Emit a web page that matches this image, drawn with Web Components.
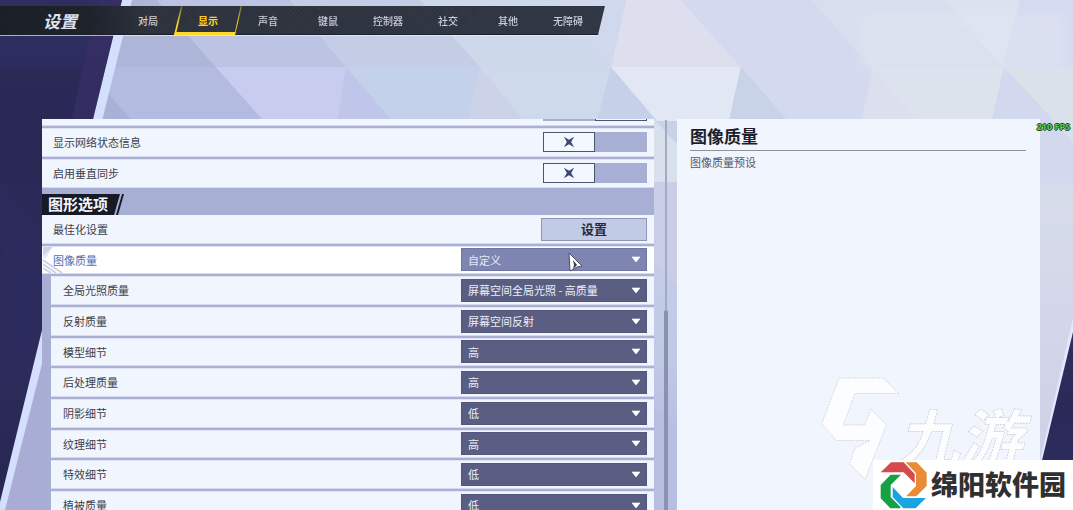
<!DOCTYPE html>
<html lang="zh-CN">
<head>
<meta charset="utf-8">
<meta name="viewport" content="width=device-width, initial-scale=1">
<title>设置</title>
<style>
  html, body { margin: 0; height: 100%; }
  body {
    overflow: hidden;
    font-family: "Noto Sans CJK SC", "Noto Sans", sans-serif;
    color: #3c404c;
  }
</style>
</head>
<body>
<settings-screen></settings-screen>

<script>
const define = (name, html, setup) => {
  const template = document.createElement('template');
  template.innerHTML = html;
  customElements.define(name, class extends HTMLElement {
    connectedCallback() {
      if (this.shadowRoot) return;
      const root = this.attachShadow({ mode: 'open' });
      root.append(template.content.cloneNode(true));
      if (setup) setup(this, root);
    }
  });
};

/* Faceted backdrop behind everything */
define('facet-backdrop', `
<style>
  :host { position: absolute; inset: 0; }
  svg { display: block; width: 100%; height: 100%; }
</style>
<svg viewBox="0 0 1073 510" preserveAspectRatio="none" aria-hidden="true">
  <defs>
    <linearGradient id="base" x1="0" y1="0" x2="0" y2="1">
      <stop offset="0.2" stop-color="#c8d2e9"/><stop offset="0.7" stop-color="#c0cae6"/><stop offset="0.85" stop-color="#b9bde2"/>
    </linearGradient>
    <linearGradient id="side" x1="0" y1="0" x2="0" y2="1">
      <stop offset="0" stop-color="#d9dfec"/><stop offset="1" stop-color="#cdcee6"/>
    </linearGradient>
    <linearGradient id="dark" x1="0" y1="0" x2="0" y2="1">
      <stop offset="0" stop-color="#2f2e61"/><stop offset="0.4" stop-color="#2a2958"/><stop offset="0.7" stop-color="#2c2b5c"/><stop offset="1" stop-color="#282751"/>
    </linearGradient>
    <filter id="soft"><feGaussianBlur stdDeviation="6"/></filter>
  </defs>
  <rect width="1073" height="510" fill="url(#base)"/>
  <path fill="#adb6d8" d="M100 0H157L216 67H80z"/>
  <path fill="#bcc3e3" d="M157 0H290L346 67H216z"/>
  <path fill="#c4cce6" d="M290 0H420L480 67H346z"/>
  <path fill="#cdd8eb" d="M420 0H552L611 67H480z"/>
  <path fill="#d0d8ee" d="M552 0H626L611 67z"/>
  <path fill="#dddfee" d="M626 0H681L741 67H611z"/>
  <path fill="#d5d9ef" d="M681 0H811L870 67H741z"/>
  <path fill="#d9deee" d="M811 0H943L1003 67H870z"/>
  <path fill="#dde3ee" d="M943 0H1020L1003 67z"/>
  <path fill="#d6daf0" d="M1020 0H1073V67H1003z"/>
  <path fill="#b3bbe0" d="M80 67H216L264 121H60z"/>
  <path fill="#a9b2d6" d="M108 93L132 121H102z"/>
  <path fill="#c8cdef" d="M216 67H346L337 121H264z"/>
  <path fill="#bfc6ea" d="M346 67L393 121H337z"/>
  <path fill="#c3d2ea" d="M346 67H480L468 121H393z"/>
  <path fill="#ccd2e8" d="M480 67L524 121H468z"/>
  <path fill="#cedaeb" d="M480 67H611L597 121H524z"/>
  <path fill="#c6d0e9" d="M611 67L657 121H597z"/>
  <path fill="#e1e7f3" d="M611 67H741L729 121H657z"/>
  <path fill="#c8d3e7" d="M741 67L788 121H729z"/>
  <path fill="#d3d9ef" d="M741 67H873L861 121H788z"/>
  <path fill="#dcdfed" d="M873 67L917 121H861z"/>
  <path fill="#dce3ed" d="M870 67H1004L992 121H917z"/>
  <path fill="url(#side)" d="M1036 119H1073V510H1036z"/>
  <path fill="#d2d8ed" d="M1004 67L1073 142V183H1036L992 121z"/>
  <path fill="#dae1eb" d="M1004 67H1073V142z"/>
  <path fill="#d8e0ec" d="M654 119L677 144V182H654z"/>
  <path fill="#c9cee6" d="M654 182H677V286L654 262z"/>
  <path fill="#b8bde2" d="M654 410L677 430V510H654z"/>
  <rect x="860" y="14" width="205" height="56" fill="#e0e5f2" opacity=".55" filter="url(#soft)"/>
  <path fill="#a9add5" d="M44 330V510H0z"/>
  <path fill="#d4defd" d="M121 0H132L102 121L42 364L5 510H0V490z"/>
  <path fill="url(#dark)" d="M0 0H122L93 119L42 330L0 502z"/>
  <path fill="#392f65" opacity=".6" d="M98 0H122L93 119H72L90 36z"/>
  <path fill="#28264f" opacity=".5" d="M0 67H82L72 119L42 180V183H0z"/>
  <path fill="#302e62" opacity=".4" d="M0 183L42 230V330L8 370z"/>
  <path fill="#e0e9ff" d="M1073 318V340L1044 470H1038z"/>
  <path fill="url(#dark)" d="M1073 332V510H1030z"/>
</svg>`);

define('top-nav', `
<style>
  :host { display: block; filter: drop-shadow(0 1px 0 #eef2fbaa); }
  header {
    display: flex; align-items: center; width: 605px; height: 29px; max-width: 100%;
    clip-path: polygon(0 0, 100% 0, calc(100% - 7px) 100%, 0 100%);
    background:
      repeating-linear-gradient(45deg, #ffffff05 0 1px, transparent 1px 3px),
      repeating-linear-gradient(-45deg, #0000000c 0 1px, transparent 1px 3px),
      linear-gradient(90deg, #1a1e26 0, #1d222b 90px, #2d323d 150px, #303745);
    box-shadow: inset 0 -1px #1b202b;
  }
  h1 { flex: none; box-sizing: border-box; width: 118px; margin: 0; padding-left: 43px; font-size: 17px; line-height: 29px; font-weight: 700; font-style: italic; color: #dbe2f0; }
  nav { display: flex; height: 100%; }
</style>
<header>
  <h1>设置</h1>
  <nav aria-label="设置"><slot></slot></nav>
</header>`);

define('nav-tab', `
<style>
  :host { position: relative; display: block; width: 60px; height: 29px; }
  button { width: 100%; height: 100%; padding: 0; border: 0; background: none; font: 500 10px/29px "Noto Sans CJK SC", sans-serif; color: #c9ced9; cursor: pointer; }
  svg { display: none; position: absolute; left: -4px; top: 0; pointer-events: none; }
  :host([active]) svg { display: block; }
  :host([active]) button { color: #fad51f; font-weight: 700; }
</style>
<button type="button"><slot></slot></button>
<svg width="68" height="29" aria-hidden="true">
  <defs><linearGradient id="g" x1="0" y1="0" x2="0" y2="1"><stop offset="0" stop-color="#ffd926" stop-opacity=".3"/><stop offset=".6" stop-color="#ffd926"/></linearGradient></defs>
  <path d="M7 0H8.500L2.500 26H61L66.500 0H68L61 29H0z" fill="url(#g)"/>
  <path d="M1 26H61.500L61 29H0z" fill="#ffd92a"/>
</svg>`);

define('section-title', `
<style>
  :host { display: flex; align-items: flex-end; height: 27px; background: #a8afd4; }
  h2 {
    margin: 0; padding: 0 12px 0 6px; height: 21px; font-size: 15px; line-height: 20px; font-weight: 700; color: #f2f5fc;
    background: #171a26; clip-path: polygon(0 0, 100% 0, calc(100% - 6px) 100%, 0 100%);
  }
  i { width: 8px; height: 21px; margin-left: -4px; background: #171a26; clip-path: polygon(75% 0, 100% 0, 25% 100%, 0 100%); }
</style>
<h2><slot></slot></h2><i></i>`);

/* One setting: a label and its control, chosen by the "type" attribute */
define('setting-row', `
<style>
  :host {
    box-sizing: border-box; display: flex; align-items: center; justify-content: space-between;
    padding: 0 7px 1px 11px; background: #f1f5fe; border-top: 2px solid #aab0d3;
    box-shadow: inset 0 1px #dfe4f4, inset 0 -1px #d5daef;
  }
  :host([plain]) { border-top: 0; box-shadow: inset 0 -1px #d5daef; }
  :host([sub]) { margin-left: 9px; padding-left: 12px; }
  :host([active]) { position: relative; background: #fff; }
  .name { font-size: 11px; line-height: 16px; color: #3b3f4b; white-space: nowrap; }
  :host([active]) .name { color: #4f6fb5; position: relative; }
  .deco { display: none; position: absolute; left: 1px; top: 1px; }
  :host([active]) .deco { display: block; }

  .select { display: grid; align-items: center; width: 186px; height: 23px; }
  .select > * { grid-area: 1 / 1; }
  select {
    appearance: none; box-sizing: border-box; width: 100%; height: 100%; margin: 0; padding: 0 20px 0 6px; border: 1px solid #53577b; border-radius: 0;
    background: #595e82; color: #eceff8; font: 400 11px/16px "Noto Sans CJK SC", sans-serif;
  }
  :host([active]) select { background: #7e85b1; border-color: #6f76a2; color: #e6e9f6; }
  .select svg { justify-self: end; margin-right: 6px; pointer-events: none; }

  .toggle { display: grid; grid-template-columns: 1fr 1fr; align-items: center; width: 104px; height: 20px; background: #a8afd4; }
  input { appearance: none; grid-area: 1 / 1; box-sizing: border-box; width: 100%; height: 100%; margin: 0; border: 1px solid #4e5372; background: #f3f8ff; }
  input:checked { grid-column: 2; }
  .toggle svg { grid-area: 1 / 1; justify-self: center; pointer-events: none; }
  input:checked + svg { visibility: hidden; }

  button { box-sizing: border-box; width: 106px; height: 23px; padding: 0; border: 1px solid #9097b6; background: #c2cbe5; color: #262a3c; font: 700 13px/20px "Noto Sans CJK SC", sans-serif; }
</style>
<svg class="deco" width="26" height="26" aria-hidden="true">
  <path d="M0 0H10L0 9z" fill="#cdd2e9"/><path d="M0 9L10 0L2 12z" fill="#e4e7f4"/>
  <path d="M0 13L19 26M0 17L13 26M0 21L8 26" stroke="#cdd2e9" stroke-width="2"/>
</svg>
<label class="name" for="control"></label>`, (host, root) => {
  const name = host.getAttribute('name');
  const value = host.getAttribute('value');
  root.querySelector('.name').textContent = name;
  const controls = {
    select: `<span class="select"><select id="control"><option>${value}</option></select>
      <svg width="10" height="7" aria-hidden="true"><path d="M1 1H9L5 6z" fill="#fff" stroke="#fff" stroke-width=".6"/></svg></span>`,
    toggle: `<span class="toggle"><input type="checkbox" id="control" ${host.hasAttribute('on') ? 'checked' : ''}>
      <svg width="12" height="12" viewBox="0 0 14 14" aria-hidden="true"><path d="M1 1L7 4.500L13 1L9.500 7L13 13L7 9.500L1 13L4.500 7z" fill="#3d4974"/></svg></span>`,
    button: `<button type="button" id="control">${value}</button>`
  };
  root.querySelector('.name').insertAdjacentHTML('afterend', controls[host.getAttribute('type')]);
});

/* Scrolled column of settings */
define('settings-list', `
<style>
  :host { display: block; min-width: 0; overflow: hidden; background: #a8aed4; }
  .scrolled { margin-top: -24px; }
</style>
<div class="scrolled"><slot></slot></div>`);

define('row-group', `
<style>
  :host { display: grid; grid-auto-rows: 31px; }
  :host([first]) { grid-auto-rows: 29px; }
  :host([dense]) { grid-auto-rows: 30px 31px 31px; }
</style>
<slot></slot>`);

define('scroll-track', `
<style>
  :host { display: grid; justify-items: center; grid-template-rows: 190px 1fr; padding-top: 1px; }
  .track { width: 2px; background: #a2aac6; }
  .thumb { width: 4px; border-radius: 2px 2px 0 0; background: #8b92ad; }
</style>
<div class="track"></div><div class="thumb"></div>`);

define('info-panel', `
<style>
  :host { display: block; min-width: 0; padding: 5px 14px 0 13px; background: #f1f5fe; }
  h2 { margin: 0; padding-bottom: 2px; border-bottom: 1px solid #8f929d; font-size: 17px; line-height: 24px; font-weight: 700; color: #1c1e2c; }
  p { margin: 3px 0 0; font-size: 11px; line-height: 16px; color: #555965; }
</style>
<h2><slot name="title"></slot></h2>
<p><slot></slot></p>`);

define('fps-counter', `
<style>
  :host {
    position: absolute; right: 3px; top: 120px; font: 700 10px/14px "Open Sans", sans-serif; font-size: 9px; color: #62c765;
    text-shadow: 1px 0 #16501c, -1px 0 #16501c, 0 1px #16501c, 0 -1px #16501c;
  }
</style>
<slot></slot>`);

define('mouse-pointer', `
<style>:host { position: absolute; left: 567px; top: 252px; pointer-events: none; } svg { display: block; }</style>
<svg width="18" height="22" viewBox="0 0 18 22" aria-hidden="true">
  <path d="M2 1L15 14L10 15L3 19z" fill="#fff" stroke="#4d5068" stroke-width="1"/>
  <path d="M6 8L10 13L6 17L7 13z" fill="#34374f"/>
</svg>`);

define('brand-watermark', `
<style>:host { position: absolute; right: 30px; bottom: 0; pointer-events: none; } svg { display: block; overflow: visible; }</style>
<svg width="223" height="150" viewBox="0 0 223 150">
  <g fill="#fcfdff" stroke="#c9cbd1" stroke-width=".7" stroke-dasharray="2 1">
    <path d="M19 18H63L79 33.500H35L23.500 65H44.500L51 49.500L66.500 65L45 119.500L29.500 104L35 88L50 80.500H16.500L1.500 64z"/>
    <text x="76" y="102" font-family="Noto Sans CJK SC, sans-serif" font-size="63" font-weight="700" font-style="italic">九游</text>
  </g>
</svg>`);

define('site-badge', `
<style>
  :host { position: absolute; right: 0; bottom: 0; display: flex; align-items: center; gap: 4px; box-sizing: border-box; width: 200px; height: 50px; padding-left: 7px; background: #fff; }
  svg { flex: none; }
  span { font-size: 27px; line-height: 40px; font-weight: 900; color: #303030; white-space: nowrap; margin-bottom: 2px; }
</style>
<svg width="47" height="47" viewBox="238 302 141 141" aria-hidden="true">
  <path fill="#d64a4b" d="M271 303H309L342 338V366L309 333H240z"/>
  <path fill="#eb8b38" d="M315 303H348L378 334V374L347 405H316L346 374V336z"/>
  <path fill="#18a044" d="M240 371L270 340H301L270 371V407L299 436V441H269L240 411z"/>
  <path fill="#1ba4e2" d="M276 377L307 410H376L345 441H308L276 407z"/>
</svg>
<span><slot></slot></span>`);

define('settings-screen', `
<style>
  :host { position: relative; display: flex; flex-direction: column; height: 100vh; overflow: hidden; }
  top-nav { position: relative; margin: 6px 0 84px; }
  main { position: relative; flex: 1; min-height: 0; display: grid; grid-template-columns: minmax(0, 612fr) 23px minmax(0, 363fr); padding: 0 33px 0 42px; }
</style>
<facet-backdrop></facet-backdrop>
<top-nav>
  <nav-tab>对局</nav-tab><nav-tab active>显示</nav-tab><nav-tab>声音</nav-tab><nav-tab>键鼠</nav-tab>
  <nav-tab>控制器</nav-tab><nav-tab>社交</nav-tab><nav-tab>其他</nav-tab><nav-tab>无障碍</nav-tab>
</top-nav>
<main>
  <settings-list>
    <row-group>
      <setting-row type="toggle" name="" on></setting-row>
      <setting-row type="toggle" name="显示网络状态信息"></setting-row>
      <setting-row type="toggle" name="启用垂直同步"></setting-row>
    </row-group>
    <section-title>图形选项</section-title>
    <row-group first>
      <setting-row plain type="button" name="最佳化设置" value="设置"></setting-row>
    </row-group>
    <row-group dense>
      <setting-row active type="select" name="图像质量" value="自定义"></setting-row>
      <setting-row sub type="select" name="全局光照质量" value="屏幕空间全局光照 - 高质量"></setting-row>
      <setting-row sub type="select" name="反射质量" value="屏幕空间反射"></setting-row>
      <setting-row sub type="select" name="模型细节" value="高"></setting-row>
      <setting-row sub type="select" name="后处理质量" value="高"></setting-row>
      <setting-row sub type="select" name="阴影细节" value="低"></setting-row>
      <setting-row sub type="select" name="纹理细节" value="高"></setting-row>
      <setting-row sub type="select" name="特效细节" value="低"></setting-row>
      <setting-row sub type="select" name="植被质量" value="低"></setting-row>
    </row-group>
  </settings-list>
  <scroll-track></scroll-track>
  <info-panel><span slot="title">图像质量</span>图像质量预设</info-panel>
</main>
<fps-counter>210 FPS</fps-counter>
<mouse-pointer></mouse-pointer>
<brand-watermark></brand-watermark>
<site-badge>绵阳软件园</site-badge>`);
</script>
</body>
</html>
